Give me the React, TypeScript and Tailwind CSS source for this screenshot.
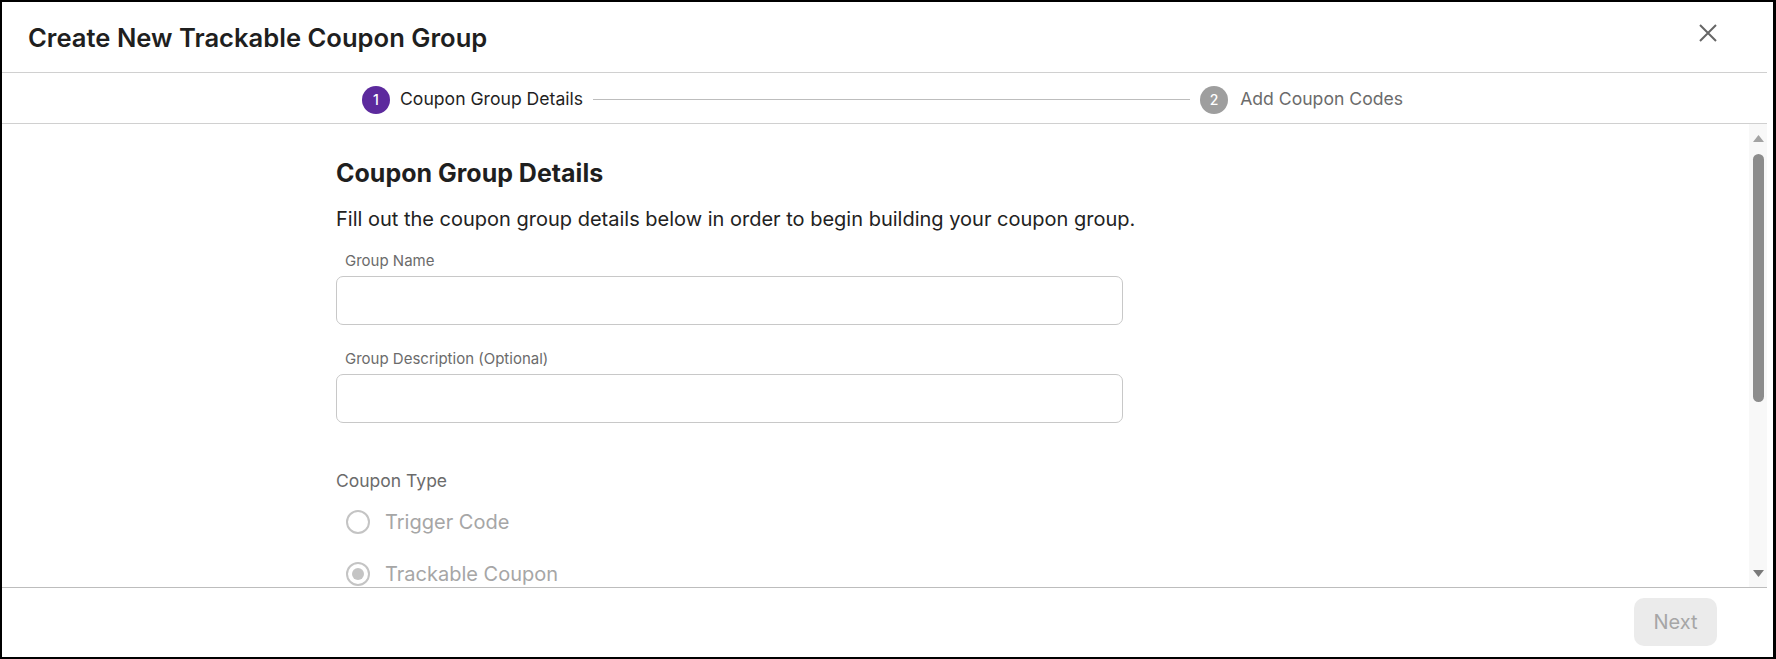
import React from 'react';

const font = { fontFamily: 'Inter, "Noto Sans", sans-serif' };

function StepCircle({ n, active }: { n: number; active: boolean }) {
    return (
        <div
            className={`w-[28px] h-[28px] rounded-full flex items-center justify-center text-[14px] font-medium text-white ${
                active ? 'bg-[#5c2a9d]' : 'bg-[#9e9e9e]'
            }`}
        >
            {n}
        </div>
    );
}

function Radio({ label, checked }: { label: string; checked?: boolean }) {
    return (
        <label className="flex items-center h-[40px] pl-[10px] gap-[15px]">
            <span className="w-[24px] h-[24px] rounded-full border-2 border-[#c4c4c4] flex items-center justify-center">
                {checked && <span className="w-[12px] h-[12px] rounded-full bg-[#c4c4c4]" />}
            </span>
            <span className="text-[20px] text-[#a6a6a6]">{label}</span>
        </label>
    );
}

function Field({ label }: { label: string }) {
    return (
        <div className="flex flex-col">
            <span className="pl-[9px] text-[15px] leading-[20px] text-[#6b6b6b]">{label}</span>
            <input
                className="mt-[5px] w-[787px] h-[49px] rounded-[7px] border border-[#c8c8c8] bg-white outline-none px-3 text-[16px]"
                type="text"
            />
        </div>
    );
}

export default function App() {
    return (
        <div
            className="w-[1776px] h-[659px] bg-white border-l-2 border-t-2 border-b-2 border-r-[3px] border-black pr-[6px] flex flex-col overflow-hidden"
            style={font}
        >
            {/* Header */}
            <div className="h-[70px] shrink-0 flex items-center justify-between pl-[26px] pr-[50px]">
                <h1 className="text-[25.6px] font-semibold text-[#1f1f1f] mt-[3px]">Create New Trackable Coupon Group</h1>
                <button className="mb-[8px] text-[#666]" aria-label="Close">
                    <svg width="18" height="18" viewBox="0 0 18 18" fill="none" stroke="currentColor" strokeWidth="2">
                        <path d="M1 1L17 17M17 1L1 17" />
                    </svg>
                </button>
            </div>
            <div className="h-px bg-[#d0d0d0] shrink-0" />

            {/* Stepper */}
            <div className="h-[50px] shrink-0 flex items-center justify-center pr-[4px] pt-[3px]">
                <div className="w-[1041px] flex items-center">
                    <StepCircle n={1} active />
                    <span className="ml-[10px] text-[17.6px] text-[#1f1f1f]">Coupon Group Details</span>
                    <div className="flex-1 h-px bg-[#bdbdbd] mx-[10px]" />
                    <StepCircle n={2} active={false} />
                    <span className="ml-[12px] text-[17.6px] text-[#6b6b6b]">Add Coupon Codes</span>
                </div>
            </div>
            <div className="h-px bg-[#d0d0d0] shrink-0" />

            {/* Body */}
            <div className="flex-1 flex min-h-0">
                <div className="flex-1 overflow-hidden pl-[334px] pt-[33px]">
                    <h2 className="text-[25px] leading-[32px] font-bold text-[#1f1f1f]">Coupon Group Details</h2>
                    <p className="mt-[16px] text-[20px] leading-[28px] text-[#222]">
                        Fill out the coupon group details below in order to begin building your coupon group.
                    </p>
                    <div className="mt-[18px] flex flex-col gap-[24px]">
                        <Field label="Group Name" />
                        <Field label="Group Description (Optional)" />
                    </div>
                    <div className="mt-[46px] text-[17.5px] leading-[24px] text-[#6b6b6b]">Coupon Type</div>
                    <div className="mt-[9px] flex flex-col gap-[12px]">
                        <Radio label="Trigger Code" />
                        <Radio label="Trackable Coupon" checked />
                    </div>
                </div>

                {/* Scrollbar */}
                <div className="w-[18px] bg-[#f8f8f8] flex flex-col items-center">
                    <div className="h-[28px] flex items-center justify-center">
                        <svg width="11" height="7" viewBox="0 0 11 7"><path d="M5.5 0L11 7H0Z" fill="#a3a3a3" /></svg>
                    </div>
                    <div className="mt-[2px] w-[11px] h-[248px] rounded-full bg-[#8c8c8c]" />
                    <div className="flex-1" />
                    <div className="h-[28px] flex items-center justify-center">
                        <svg width="11" height="7" viewBox="0 0 11 7"><path d="M0 0H11L5.5 7Z" fill="#7a7a7a" /></svg>
                    </div>
                </div>
            </div>
            <div className="h-px bg-[#bdbdbd] shrink-0" />

            {/* Footer */}
            <div className="h-[69px] shrink-0 flex items-center justify-end pr-[50px]">
                <button className="w-[83px] h-[48px] rounded-[10px] bg-[#ebebeb] text-[20px] text-[#a6a6a6] -mt-[2px]" disabled>
                    Next
                </button>
            </div>
        </div>
    );
}
